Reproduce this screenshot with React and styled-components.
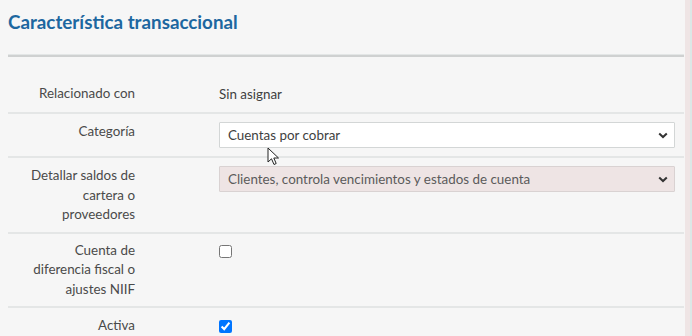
import styled, { createGlobalStyle } from "styled-components";

const GlobalStyle = createGlobalStyle`
  html, body {
    margin: 0;
    padding: 0;
    background: #f6f6f6;
    overflow: hidden;
  }
  * {
    box-sizing: border-box;
  }
`;

const Page = styled.div`
  display: flex;
  width: 692px;
  height: 336px;
  overflow: hidden;
  background: #f6f6f6;
  font-family: "Lato", "Open Sans", sans-serif;
  color: #474747;
  position: relative;
`;

const Main = styled.div`
  flex: 1;
  padding: 0 1px 0 8px;
`;

const Edge = styled.div`
  width: 7px;
  background: #efe5e5;
  border-right: 2px solid #dce7e6;
`;

const Header = styled.div`
  height: 57px;
  padding-top: 10px;
  border-bottom: 2px solid #cfd1d1;
  box-shadow: 0 -1px 0 #e3e6e6 inset;
`;

const Title = styled.h2`
  margin: 0;
  font-size: 18.8px;
  line-height: 24px;
  font-weight: 700;
  color: #1d67a0;
`;

const Form = styled.div`
  padding-top: 19px;
`;

const Row = styled.div`
  display: grid;
  grid-template-columns: 127px 1fr;
  column-gap: 84px;
  padding: ${(p) => p.$pad || "8px 9px 8px 0"};
  border-bottom: ${(p) => (p.$last ? "none" : "2px solid #e4e6e6")};
`;

const Label = styled.div`
  padding-left: 18px;
  text-align: right;
  font-size: 13.4px;
  line-height: 19.5px;
  color: #4a4a4a;
`;

const Value = styled.div`
  font-size: 13.4px;
  line-height: 20px;
  color: #3f3f3f;
`;

const SelectWrap = styled.div`
  position: relative;
  height: 26px;
`;

const Select = styled.select`
  appearance: none;
  width: 100%;
  height: 26px;
  margin: 0;
  padding: 0 28px 0 8px;
  border: 1px solid ${(p) => (p.disabled ? "#d9d2d2" : "#d3d6d6")};
  border-radius: 1px;
  background: ${(p) => (p.disabled ? "#eee4e4" : "#ffffff")};
  font-family: "Lato", "Open Sans", sans-serif;
  font-size: 13.4px;
  color: ${(p) => (p.disabled ? "#5b5b5b" : "#3f3f3f")};
  opacity: 1;
  outline: none;
`;

const Chevron = styled.svg`
  position: absolute;
  right: 7px;
  top: 10px;
  width: 10px;
  height: 7px;
  pointer-events: none;
`;

const Check = styled.input`
  margin: 4px 0 0 0;
  width: 13px;
  height: 13px;
  display: block;
`;

const Cursor = styled.svg`
  position: absolute;
  left: 267px;
  top: 147px;
  width: 13px;
  height: 20px;
  pointer-events: none;
`;

function Dropdown({ value, disabled }) {
  return (
    <SelectWrap>
      <Select value={value} disabled={disabled} onChange={() => {}}>
        <option value={value}>{value}</option>
      </Select>
      <Chevron viewBox="0 0 10 7">
        <path
          d="M1.2 1.4 L5 5 L8.8 1.4"
          fill="none"
          stroke="#333"
          strokeWidth="2"
        />
      </Chevron>
    </SelectWrap>
  );
}

export default function App() {
  return (
    <Page>
      <GlobalStyle />
      <Main>
        <Header>
          <Title>Característica transaccional</Title>
        </Header>
        <Form>
          <Row>
            <Label>Relacionado con</Label>
            <Value>Sin asignar</Value>
          </Row>
          <Row>
            <Label>Categoría</Label>
            <Value>
              <Dropdown value="Cuentas por cobrar" />
            </Value>
          </Row>
          <Row $pad="8px 9px 7px 0">
            <Label>Detallar saldos de cartera o proveedores</Label>
            <Value>
              <Dropdown
                value="Clientes, controla vencimientos y estados de cuenta"
                disabled
              />
            </Value>
          </Row>
          <Row $pad="7px 9px 7px 0">
            <Label>Cuenta de diferencia fiscal o ajustes NIIF</Label>
            <Value>
              <Check type="checkbox" />
            </Value>
          </Row>
          <Row $last>
            <Label>Activa</Label>
            <Value>
              <Check type="checkbox" defaultChecked />
            </Value>
          </Row>
        </Form>
      </Main>
      <Edge />
      <Cursor viewBox="0 0 13 20">
        <path
          d="M1 1 L1 15 L4.5 11.8 L7 17.5 L9.2 16.5 L6.8 11 L11.5 11 Z"
          fill="#fff"
          stroke="#222"
          strokeWidth="1"
          strokeLinejoin="round"
        />
      </Cursor>
    </Page>
  );
}
